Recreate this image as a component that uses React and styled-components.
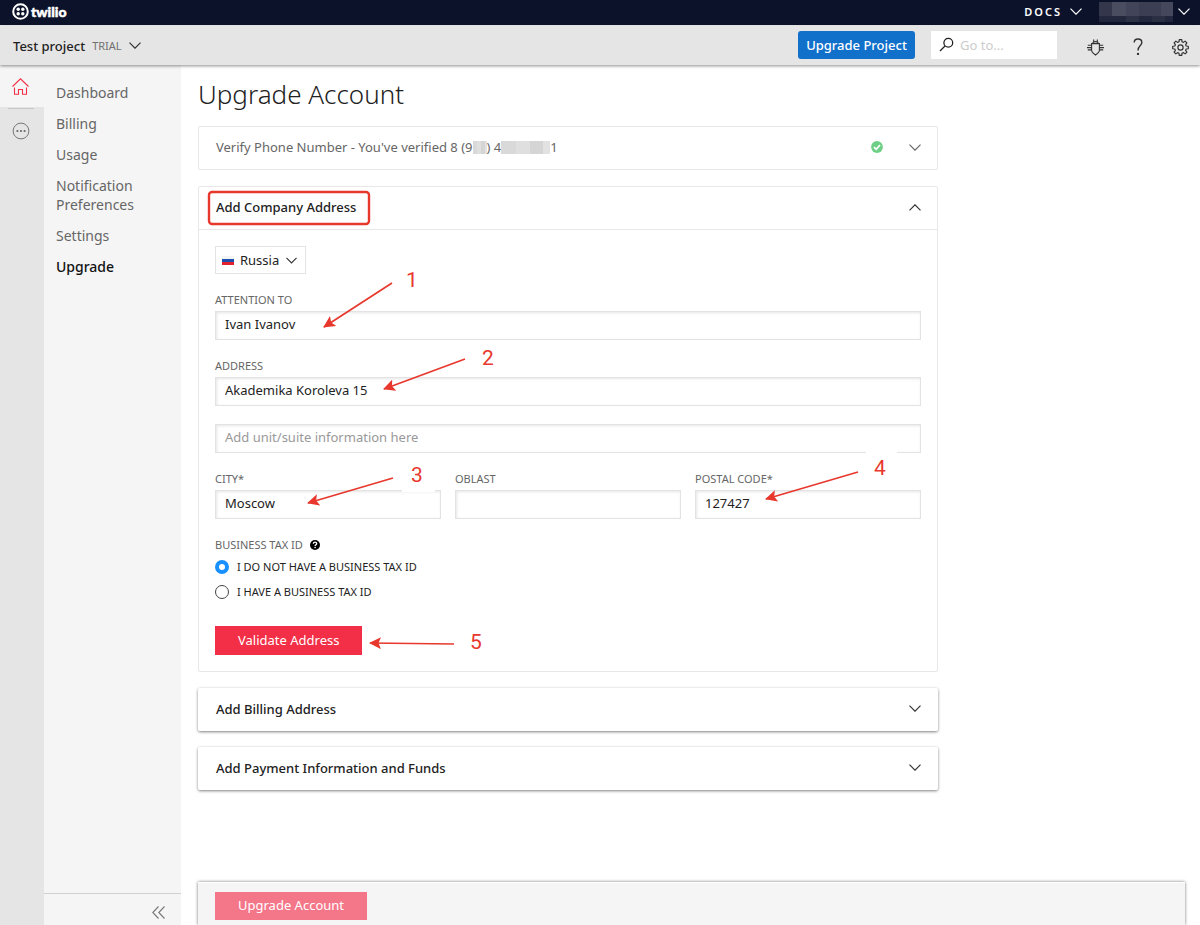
import { useState } from "react";
import styled, { createGlobalStyle } from "styled-components";

const GlobalStyle = createGlobalStyle`
    * {
        box-sizing: border-box;
    }
    body {
        margin: 0;
        background: #ffffff;
        color: #222222;
        font-family: "Noto Sans", "Open Sans", sans-serif;
        font-size: 13px;
    }
    button, input, select {
        font-family: inherit;
        font-size: inherit;
        color: inherit;
        margin: 0;
    }
    button {
        border: 0;
        padding: 0;
        background: none;
        cursor: pointer;
    }
    svg {
        display: block;
        flex: none;
    }
`

const Page = styled.div`
    min-height: 100vh;
    display: flex;
    flex-direction: column;
`

const TopBar = styled.header`
    height: 26px;
    padding: 0 10px 2px 12px;
    display: flex;
    align-items: center;
    justify-content: space-between;
    background: #0d122b;
    border-bottom: 1px solid #f4f4f4;
    color: #ffffff;
`

const Brand = styled.a`
    display: flex;
    align-items: center;
    gap: 2px;
    color: #ffffff;
    text-decoration: none;
    font-family: Lato, sans-serif;
    font-weight: 900;
    font-size: 14px;
    line-height: 16px;
    -webkit-text-stroke: 0.5px #ffffff;
`

const TopLinks = styled.nav`
    display: flex;
    align-items: center;
    gap: 17px;
`

const TopLink = styled.button`
    display: flex;
    align-items: center;
    gap: ${(props) => props.$gap}px;
    color: #ffffff;
    font-size: 11px;
    font-weight: 600;
    letter-spacing: 2px;
`

const ProjectBar = styled.div`
    position: relative;
    height: 39px;
    padding: 0 11px 0 13px;
    display: flex;
    align-items: center;
    justify-content: space-between;
    background: #e5e5e5;
    box-shadow: 0 1px 3px rgba(0, 0, 0, 0.45);
`

const ProjectPicker = styled.button`
    display: flex;
    align-items: center;
    gap: 7px;
    font-weight: 500;
`

const Trial = styled.span`
    color: #717171;
    font-size: 11px;
    font-weight: 400;
`

const ProjectTools = styled.div`
    display: flex;
    align-items: center;
    gap: 16px;
    padding-bottom: 2px;
`

const UpgradeProject = styled.button`
    width: 117px;
    height: 28px;
    border-radius: 3px;
    background: #1070ca;
    color: #ffffff;
    font-weight: 500;
`

const Search = styled.label`
    width: 126px;
    height: 28px;
    padding: 0 8px;
    display: flex;
    align-items: center;
    gap: 6px;
    background: #ffffff;
`

const SearchInput = styled.input`
    width: 100%;
    min-width: 0;
    border: 0;
    padding: 0;
    outline: none;
    background: none;
    &::placeholder {
        color: #cccccc;
        opacity: 1;
    }
`

const IconGroup = styled.div`
    display: flex;
    align-items: center;
    gap: 29px;
    padding: 5px 0 0 14px;
`

const Body = styled.div`
    flex: 1;
    display: flex;
`

const Rail = styled.nav`
    width: 44px;
    background: #e5e5e5;
`

const RailButton = styled.button`
    width: 44px;
    height: 42px;
    padding-right: 3px;
    display: flex;
    align-items: center;
    justify-content: center;
    background: ${(props) => (props.$active ? "#f5f5f5" : "transparent")};
`

const RailDivider = styled.div`
    width: 26px;
    height: 1px;
    margin: 1px 0 1px 8px;
    background: #c6c6c6;
`

const Sidebar = styled.aside`
    width: 137px;
    display: flex;
    flex-direction: column;
    justify-content: space-between;
    background: #f5f5f5;
`

const SideLinks = styled.nav`
    display: flex;
    flex-direction: column;
    gap: 12px;
    padding: 18px 12px;
`

const SideLink = styled.a`
    color: ${(props) => (props.$active ? "#111111" : "#666666")};
    font-size: 14px;
    font-weight: ${(props) => (props.$active ? 500 : 400)};
    line-height: 19px;
    text-decoration: none;
`

const Collapse = styled.button`
    height: 32px;
    padding: 5px 16px 0;
    display: flex;
    align-items: center;
    justify-content: flex-end;
    border-top: 1px solid #d0d0d0;
`

const Main = styled.main`
    flex: 1;
    min-width: 0;
    padding: 10px 15px 0 17px;
    display: flex;
    flex-direction: column;
`

const Title = styled.h1`
    margin: 0 0 13px;
    font-size: 26px;
    font-weight: 300;
    line-height: 38px;
`

const Panels = styled.div`
    max-width: 740px;
    display: flex;
    flex-direction: column;
    gap: 16px;
`

const Panel = styled.section`
    position: relative;
    border: 1px solid ${(props) => (props.$raised ? "#ffffff" : "#e8e8e8")};
    border-radius: 2px;
    box-shadow: ${(props) => (props.$raised ? "0 1px 3px rgba(0, 0, 0, 0.5)" : "none")};
`

const PanelHeader = styled.button`
    width: 100%;
    height: ${(props) => (props.$raised ? 41 : 42)}px;
    padding: 0 16px 2px 17px;
    display: flex;
    align-items: center;
    justify-content: space-between;
    color: ${(props) => (props.$done ? "#666666" : "#222222")};
    font-weight: ${(props) => (props.$done ? 400 : 500)};
`

const HeaderText = styled.span`
    display: flex;
    align-items: center;
    white-space: pre;
`

const HeaderIcons = styled.span`
    display: flex;
    align-items: center;
    gap: 26px;
`

const Masked = styled.span`
    width: ${(props) => props.$width}px;
    height: 13px;
    background: linear-gradient(90deg, #d9d9d9 0 30%, #dfdfdf 30% 60%, #d5d5d5 60% 85%, #e2e2e2 85%);
`

const Form = styled.form`
    padding: 16px;
    display: flex;
    flex-direction: column;
    gap: 18px;
    border-top: 1px solid #e8e8e8;
`

const Country = styled.label`
    align-self: flex-start;
    height: 28px;
    padding: 0 8px 0 6px;
    display: flex;
    align-items: center;
    gap: 6px;
    border: 1px solid #e3e3e3;
`

const CountrySelect = styled.select`
    appearance: none;
    border: 0;
    padding: 0;
    background: none;
    outline: none;
`

const Row = styled.div`
    display: grid;
    grid-template-columns: repeat(3, 1fr);
    gap: 14px;
`

const FieldWrapper = styled.div`
    display: flex;
    flex-direction: column;
    gap: 3px;
`

const FieldLabel = styled.label`
    color: #666666;
    font-size: 11px;
    line-height: 16px;
`

const TextInput = styled.input`
    width: 100%;
    height: 29px;
    padding: 0 9px 3px;
    border: 1px solid #e3e3e3;
    outline: none;
    background: #ffffff;
    box-shadow: inset 1px 1px 3px rgba(0, 0, 0, 0.1);
    &::placeholder {
        color: #999999;
        opacity: 1;
    }
`

const TaxGroup = styled.fieldset`
    margin: 0 0 6px;
    padding: 0;
    border: 0;
    display: flex;
    flex-direction: column;
    gap: 5px;
`

const TaxLegend = styled.legend`
    padding: 0 0 4px;
    display: flex;
    align-items: center;
    gap: 7px;
    color: #666666;
    font-size: 11px;
    line-height: 16px;
`

const RadioLabel = styled.label`
    height: 20px;
    padding-bottom: 1px;
    display: flex;
    align-items: center;
    gap: 8px;
    font-size: 11px;
`

const Radio = styled.input`
    appearance: none;
    width: 14px;
    height: 14px;
    border: 1px solid #444444;
    border-radius: 50%;
    background: #ffffff;
    &:checked {
        border: 4px solid #1890ff;
    }
`

const PrimaryButton = styled.button`
    align-self: flex-start;
    height: ${(props) => (props.disabled ? 28 : 29)}px;
    padding: 0 23px 2px;
    background: ${(props) => (props.disabled ? "#f47689" : "#f22f46")};
    color: #ffffff;
`

const FooterBar = styled.footer`
    margin-top: auto;
    padding: 9px 17px 5px;
    display: flex;
    background: #f5f5f5;
    box-shadow: 0 0 3px rgba(0, 0, 0, 0.55);
    border-top: 1px solid #ffffff;
`

// sits over the address panel, measured from its top left corner
const Notes = styled.svg`
    position: absolute;
    top: -1px;
    left: -1px;
    pointer-events: none;
`

const NoteText = styled.text`
    fill: #e8382d;
    font-family: Roboto, sans-serif;
    font-size: 21px;
`

function Chevron({ size = 12, color = "#333333", up }) {
    return (
        <svg width={size} height={7} viewBox="0 0 12 7" fill="none" stroke={color} strokeWidth="1.2">
            <path d={up ? "M0.5 6.3 6 0.8 11.5 6.3" : "M0.5 0.7 6 6.2 11.5 0.7"} />
        </svg>
    )
}

function LogoIcon() {
    return (
        <svg width="17" height="17" viewBox="0 0 17 17" fill="#ffffff">
            <circle cx="8.5" cy="8.5" r="7.3" fill="none" stroke="#ffffff" strokeWidth="2" />
            <circle cx="6.2" cy="6.2" r="1.7" />
            <circle cx="10.8" cy="6.2" r="1.7" />
            <circle cx="6.2" cy="10.8" r="1.7" />
            <circle cx="10.8" cy="10.8" r="1.7" />
        </svg>
    )
}

function AccountMask() {
    return (
        <svg width="74" height="20" viewBox="0 0 74 20">
            <rect width="74" height="20" fill="#23273d" />
            <rect width="13" height="14" fill="#34374c" />
            <rect x="13" width="14" height="14" fill="#4a4d60" />
            <rect x="27" width="13" height="14" fill="#42455a" />
            <rect x="40" width="22" height="14" fill="#3c3f54" />
            <rect x="62" width="12" height="14" fill="#45485c" />
            <rect x="27" y="14" width="13" height="6" fill="#2d3146" />
            <rect x="53" y="14" width="13" height="6" fill="#2b2f44" />
        </svg>
    )
}

function SearchIcon() {
    return (
        <svg width="15" height="15" viewBox="0 0 15 15" fill="none" stroke="#222222" strokeWidth="1.3">
            <circle cx="9.3" cy="5.7" r="4.4" />
            <path d="M6 9 1 14" />
        </svg>
    )
}

function BugIcon() {
    return (
        <svg width="17" height="17" viewBox="0 0 17 17" fill="none" stroke="#333333" strokeWidth="1.1">
            <path d="M4.6 4.6h7.8v6.6c0 1.8-1.6 3.2-3.9 4.8-2.3-1.6-3.9-3-3.9-4.8z" />
            <path d="M5.8 4.5C5.8 3.2 6.8 2.6 8.5 2.6s2.7.6 2.7 1.9M6.7 2.6V.4M10.3 2.6V.4" />
            <path d="M4.5 6.3H.8M4.5 8.6H0M4.5 10.9H.8M12.5 6.3h3.7M12.5 8.6H17M12.5 10.9h3.7" />
        </svg>
    )
}

function HelpIcon() {
    return (
        <svg width="10" height="18" viewBox="0 0 10 18" fill="none" stroke="#333333" strokeWidth="1.4">
            <path d="M1.2 4.6C1.2 2.4 2.8 1 5 1s3.8 1.4 3.8 3.5C8.8 7.6 5 7.4 5 12.6" />
            <circle cx="5" cy="15.9" r="1.2" fill="#333333" stroke="none" />
        </svg>
    )
}

// eight teeth, four points each
const gearPoints = Array.from({ length: 32 }, (_, i) => {
    const tooth = Math.floor(i / 4) * 45
    const angle = ((tooth + [-15, -9, 9, 15][i % 4]) * Math.PI) / 180
    const radius = [5.9, 7.9, 7.9, 5.9][i % 4]
    return `${(8.5 + radius * Math.cos(angle)).toFixed(2)},${(8.5 + radius * Math.sin(angle)).toFixed(2)}`
}).join(" ")

function GearIcon() {
    return (
        <svg width="17" height="17" viewBox="0 0 17 17" fill="none" stroke="#333333" strokeWidth="1.2" strokeLinejoin="round">
            <polygon points={gearPoints} />
            <circle cx="8.5" cy="8.5" r="2.6" />
        </svg>
    )
}

function HomeIcon() {
    return (
        <svg width="17" height="17" viewBox="0 0 17 17" fill="none" stroke="#f22f46" strokeWidth="1.1">
            <path d="M.5 8.5 8.5.8l8 7.7" />
            <path d="M2.5 9.5v6.7h4v-4.7h4v4.7h4V9.5" />
        </svg>
    )
}

function MoreIcon() {
    return (
        <svg width="18" height="18" viewBox="0 0 18 18" fill="#666666">
            <circle cx="9" cy="9" r="7.9" fill="none" stroke="#777777" />
            <circle cx="5.4" cy="9" r="1.1" />
            <circle cx="9" cy="9" r="1.1" />
            <circle cx="12.6" cy="9" r="1.1" />
        </svg>
    )
}

function CheckIcon() {
    return (
        <svg width="12" height="12" viewBox="0 0 12 12" fill="none">
            <circle cx="6" cy="6" r="5.9" fill="#6fcf86" />
            <path d="M3 6.2 5.2 8.3 9 4" stroke="#ffffff" strokeWidth="1.8" />
        </svg>
    )
}

function TaxHelpIcon() {
    return (
        <svg width="10" height="10" viewBox="0 0 10 10" fill="none">
            <circle cx="5" cy="5" r="5" fill="#000000" />
            <path d="M3.3 3.8C3.4 2.7 4 2.2 5 2.2s1.7.6 1.7 1.4C6.7 4.8 5.1 4.7 5.1 6" stroke="#ffffff" strokeWidth="1.3" />
            <circle cx="5.1" cy="7.6" r=".8" fill="#ffffff" />
        </svg>
    )
}

function Flag() {
    return (
        <svg width="12" height="9" viewBox="0 0 12 9">
            <rect width="12" height="3" fill="#f4f4f4" />
            <rect y="3" width="12" height="3" fill="#1c4fae" />
            <rect y="6" width="12" height="3" fill="#e0202c" />
        </svg>
    )
}

function Field({ id, label, ...rest }) {
    return (
        <FieldWrapper>
            <FieldLabel htmlFor={id}>{label}</FieldLabel>
            <TextInput id={id} {...rest} />
        </FieldWrapper>
    )
}

const arrows = [
    { n: 1, from: [194, 97], to: [126, 141], text: [208, 101] },
    { n: 2, from: [267, 173], to: [186, 203], text: [284, 179] },
    { n: 3, from: [195, 292], to: [110, 317], text: [213, 296] },
    { n: 4, from: [660, 286], to: [568, 313], text: [676, 289] },
    { n: 5, from: [256, 458], to: [172, 457], text: [272, 463] },
]

function NotesLayer() {
    return (
        <Notes width="740" height="486" viewBox="0 0 740 486">
            <defs>
                <marker id="head" viewBox="0 0 12 12" refX="11" refY="6" markerWidth="12" markerHeight="12" markerUnits="userSpaceOnUse" orient="auto">
                    <path d="M12 6 0 0 2.5 6 0 12z" fill="#e8382d" />
                </marker>
            </defs>
            <rect x="204" y="303" width="33" height="3" fill="#ffffff" />
            <rect x="668" y="264" width="31" height="4" fill="#ffffff" />
            <rect x="11" y="6" width="160" height="32" rx="3" fill="none" stroke="#e8382d" strokeWidth="2.4" />
            {arrows.map((a) => (
                <g key={a.n}>
                    <path d={`M${a.from.join(" ")} L${a.to.join(" ")}`} stroke="#e8382d" strokeWidth="1.7" markerEnd="url(#head)" />
                    <NoteText x={a.text[0]} y={a.text[1]}>{a.n}</NoteText>
                </g>
            ))}
        </Notes>
    )
}

const links = ["Dashboard", "Billing", "Usage", "Notification Preferences", "Settings", "Upgrade"]

export default function App() {

    const [formData, setFormData] = useState({
        attention: "Ivan Ivanov",
        address: "Akademika Koroleva 15",
        unit: "",
        city: "Moscow",
        oblast: "",
        postal: "127427",
        tax: "no",
    });

    const handleChange = (event) => {
        const { name, value } = event.target;
        setFormData({ ...formData, [name]: value })
    }

    return (
        <Page>
            <GlobalStyle />
            <TopBar>
                <Brand href="#home"><LogoIcon />twilio</Brand>
                <TopLinks>
                    <TopLink $gap={8}>DOCS<Chevron color="#ffffff" /></TopLink>
                    <TopLink $gap={5} aria-label="Account"><AccountMask /><Chevron color="#ffffff" /></TopLink>
                </TopLinks>
            </TopBar>
            <ProjectBar>
                <ProjectPicker>
                    <span>Test project</span>
                    <Trial>TRIAL</Trial>
                    <Chevron />
                </ProjectPicker>
                <ProjectTools>
                    <UpgradeProject>Upgrade Project</UpgradeProject>
                    <Search>
                        <SearchIcon />
                        <SearchInput aria-label="Go to" placeholder="Go to..." />
                    </Search>
                    <IconGroup>
                        <button aria-label="Debugger"><BugIcon /></button>
                        <button aria-label="Help"><HelpIcon /></button>
                        <button aria-label="Settings"><GearIcon /></button>
                    </IconGroup>
                </ProjectTools>
            </ProjectBar>
            <Body>
                <Rail>
                    <RailButton $active aria-label="Home"><HomeIcon /></RailButton>
                    <RailDivider />
                    <RailButton aria-label="All products"><MoreIcon /></RailButton>
                </Rail>
                <Sidebar>
                    <SideLinks>
                        {links.map((link) => (
                            <SideLink key={link} href="#menu" $active={link === "Upgrade"}>{link}</SideLink>
                        ))}
                    </SideLinks>
                    <Collapse aria-label="Collapse menu">
                        <svg width="13" height="13" viewBox="0 0 13 13" fill="none" stroke="#777777" strokeWidth="1.1">
                            <path d="M6.5.5.8 6.5l5.7 6M12.5.5 6.8 6.5l5.7 6" />
                        </svg>
                    </Collapse>
                </Sidebar>
                <Main>
                    <Title>Upgrade Account</Title>
                    <Panels>
                        <Panel>
                            <PanelHeader $done>
                                <HeaderText>
                                    Verify Phone Number - You've verified 8 (9<Masked $width={14} />) 4<Masked $width={49} />1
                                </HeaderText>
                                <HeaderIcons><CheckIcon /><Chevron color="#666666" /></HeaderIcons>
                            </PanelHeader>
                        </Panel>
                        <Panel>
                            <PanelHeader>
                                <HeaderText>Add Company Address</HeaderText>
                                <Chevron up />
                            </PanelHeader>
                            <Form onSubmit={(event) => event.preventDefault()}>
                                <Country>
                                    <Flag />
                                    <CountrySelect aria-label="Country" defaultValue="Russia">
                                        <option>Russia</option>
                                    </CountrySelect>
                                    <Chevron size={11} />
                                </Country>
                                <Field id="attention" name="attention" label="ATTENTION TO" value={formData.attention} onChange={handleChange} />
                                <Field id="address" name="address" label="ADDRESS" value={formData.address} onChange={handleChange} />
                                <TextInput name="unit" aria-label="Unit or suite" placeholder="Add unit/suite information here" value={formData.unit} onChange={handleChange} />
                                <Row>
                                    <Field id="city" name="city" label="CITY*" value={formData.city} onChange={handleChange} />
                                    <Field id="oblast" name="oblast" label="OBLAST" value={formData.oblast} onChange={handleChange} />
                                    <Field id="postal" name="postal" label="POSTAL CODE*" value={formData.postal} onChange={handleChange} />
                                </Row>
                                <TaxGroup>
                                    <TaxLegend>BUSINESS TAX ID <TaxHelpIcon /></TaxLegend>
                                    <RadioLabel>
                                        <Radio type="radio" name="tax" value="no" checked={formData.tax === "no"} onChange={handleChange} />
                                        I DO NOT HAVE A BUSINESS TAX ID
                                    </RadioLabel>
                                    <RadioLabel>
                                        <Radio type="radio" name="tax" value="yes" checked={formData.tax === "yes"} onChange={handleChange} />
                                        I HAVE A BUSINESS TAX ID
                                    </RadioLabel>
                                </TaxGroup>
                                <PrimaryButton type="submit">Validate Address</PrimaryButton>
                            </Form>
                            <NotesLayer />
                        </Panel>
                        <Panel $raised>
                            <PanelHeader $raised>
                                <HeaderText>Add Billing Address</HeaderText>
                                <Chevron />
                            </PanelHeader>
                        </Panel>
                        <Panel $raised>
                            <PanelHeader $raised>
                                <HeaderText>Add Payment Information and Funds</HeaderText>
                                <Chevron />
                            </PanelHeader>
                        </Panel>
                    </Panels>
                    <FooterBar>
                        <PrimaryButton disabled>Upgrade Account</PrimaryButton>
                    </FooterBar>
                </Main>
            </Body>
        </Page>
    )
}
